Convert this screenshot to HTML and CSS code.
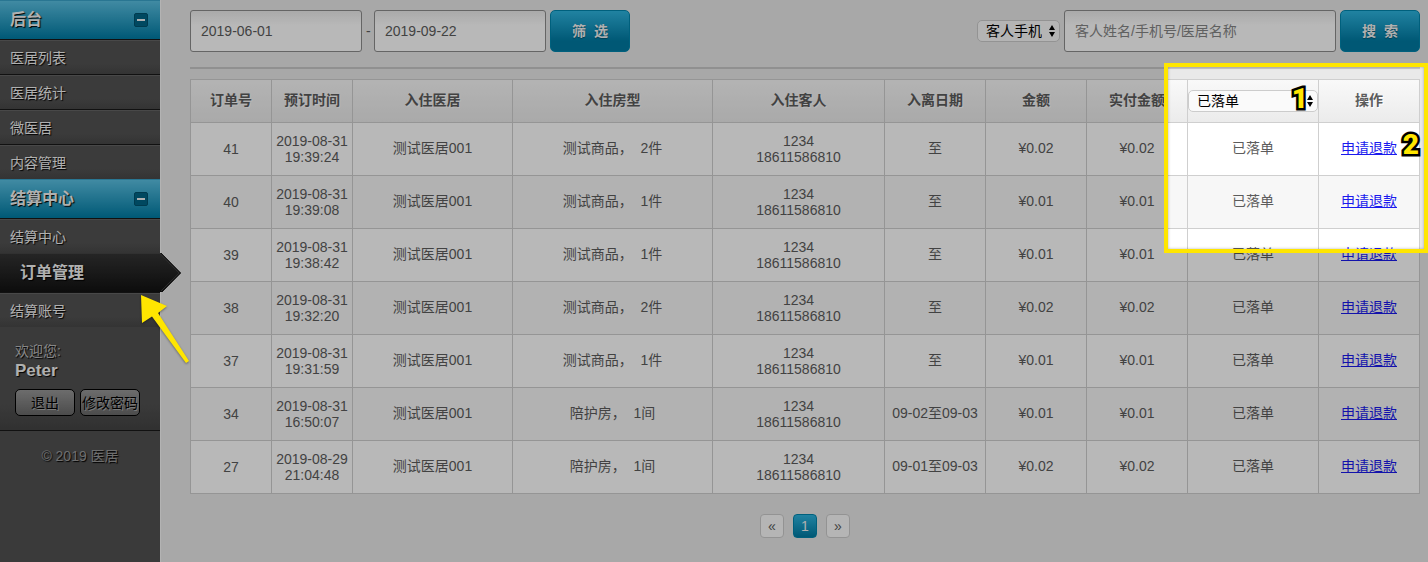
FILE: index.html
```html
<!DOCTYPE html>
<html lang="zh-CN">
<head>
<meta charset="utf-8">
<title>订单管理</title>
<link rel="stylesheet" href="styles.css">
</head>
<body>
<div class="page">
  <aside class="sidebar">
    <nav>
      <h2 class="group">后台<button class="toggle" type="button" aria-label="后台"><span class="minus"></span></button></h2>
      <ul class="menu">
        <li><a href="#">医居列表</a></li>
        <li><a href="#">医居统计</a></li>
        <li><a href="#">微医居</a></li>
        <li><a href="#">内容管理</a></li>
      </ul>
      <h2 class="group">结算中心<button class="toggle" type="button" aria-label="结算中心"><span class="minus"></span></button></h2>
      <ul class="menu">
        <li><a href="#">结算中心</a></li>
        <li class="active"><a href="#">订单管理</a>
          <svg class="pointer" viewBox="0 0 21 39" width="21" height="39" aria-hidden="true">
            <defs><linearGradient id="pt" x1="0" y1="0" x2="0" y2="1"><stop offset="0" stop-color="#343434"/><stop offset="1" stop-color="#121212"/></linearGradient></defs>
            <path d="M0 0H1L21 20L2 39H0Z" fill="url(#pt)"/>
            <path d="M0 1L19 20L1 38" fill="none" stroke="#3c3c3c" stroke-width="1"/>
            <path d="M1 0L20.500 20L2 39" fill="none" stroke="#1c1c1c" stroke-width="1"/>
          </svg>
        </li>
        <li><a href="#">结算账号</a></li>
      </ul>
    </nav>
    <section class="account">
      <p class="welcome">欢迎您:</p>
      <p class="name">Peter</p>
      <div class="account-actions">
        <button type="button">退出</button>
        <button type="button">修改密码</button>
      </div>
    </section>
    <footer class="copyright">© 2019 医居</footer>
  </aside>

  <main class="main">
    <div class="toolbar">
      <form class="filter">
        <input class="field date" type="text" value="2019-06-01" aria-label="开始日期">
        <span class="dash">-</span>
        <input class="field date" type="text" value="2019-09-22" aria-label="结束日期">
        <button class="primary" type="button">筛&nbsp; 选</button>
      </form>
      <form class="search">
        <span class="select">
          <select aria-label="搜索类型"><option>客人手机</option></select>
          <svg viewBox="0 0 8 14" width="8" height="14" aria-hidden="true"><path d="M4 1L7 6H1ZM4 13L7 8H1Z"/></svg>
        </span>
        <input class="field keyword" type="text" placeholder="客人姓名/手机号/医居名称" aria-label="关键字">
        <button class="primary" type="button">搜&nbsp; 索</button>
      </form>
    </div>

    <table class="orders">
      <colgroup>
        <col class="c-id"><col class="c-id"><col class="c-house"><col class="c-room"><col class="c-guest">
        <col class="c-mid"><col class="c-mid"><col class="c-mid"><col class="c-status"><col class="c-mid">
      </colgroup>
      <thead>
        <tr>
          <th>订单号</th><th>预订时间</th><th>入住医居</th><th>入住房型</th><th>入住客人</th><th>入离日期</th><th>金额</th><th>实付金额</th>
          <th class="status">
            <span class="select">
              <select aria-label="状态"><option>已落单</option></select>
              <svg viewBox="0 0 8 14" width="8" height="14" aria-hidden="true"><path d="M4 1L7 6H1ZM4 13L7 8H1Z"/></svg>
            </span>
          </th>
          <th>操作</th>
        </tr>
      </thead>
      <tbody>
        <tr><td>41</td><td>2019-08-31<br>19:39:24</td><td>测试医居001</td><td>测试商品，&nbsp; 2件</td><td>1234<br>18611586810</td><td>至</td><td>¥0.02</td><td>¥0.02</td><td>已落单</td><td><a href="#">申请退款</a></td></tr>
        <tr><td>40</td><td>2019-08-31<br>19:39:08</td><td>测试医居001</td><td>测试商品，&nbsp; 1件</td><td>1234<br>18611586810</td><td>至</td><td>¥0.01</td><td>¥0.01</td><td>已落单</td><td><a href="#">申请退款</a></td></tr>
        <tr><td>39</td><td>2019-08-31<br>19:38:42</td><td>测试医居001</td><td>测试商品，&nbsp; 1件</td><td>1234<br>18611586810</td><td>至</td><td>¥0.01</td><td>¥0.01</td><td>已落单</td><td><a href="#">申请退款</a></td></tr>
        <tr><td>38</td><td>2019-08-31<br>19:32:20</td><td>测试医居001</td><td>测试商品，&nbsp; 2件</td><td>1234<br>18611586810</td><td>至</td><td>¥0.02</td><td>¥0.02</td><td>已落单</td><td><a href="#">申请退款</a></td></tr>
        <tr><td>37</td><td>2019-08-31<br>19:31:59</td><td>测试医居001</td><td>测试商品，&nbsp; 1件</td><td>1234<br>18611586810</td><td>至</td><td>¥0.01</td><td>¥0.01</td><td>已落单</td><td><a href="#">申请退款</a></td></tr>
        <tr><td>34</td><td>2019-08-31<br>16:50:07</td><td>测试医居001</td><td>陪护房，&nbsp; 1间</td><td>1234<br>18611586810</td><td>09-02至09-03</td><td>¥0.01</td><td>¥0.01</td><td>已落单</td><td><a href="#">申请退款</a></td></tr>
        <tr><td>27</td><td>2019-08-29<br>21:04:48</td><td>测试医居001</td><td>陪护房，&nbsp; 1间</td><td>1234<br>18611586810</td><td>09-01至09-03</td><td>¥0.02</td><td>¥0.02</td><td>已落单</td><td><a href="#">申请退款</a></td></tr>
      </tbody>
    </table>

    <nav class="pager">
      <a href="#">«</a>
      <a href="#" class="current">1</a>
      <a href="#">»</a>
    </nav>
  </main>

  <div class="guide">
    <div class="spotlight"></div>
    <span class="step step-one">1</span>
    <span class="step step-two">2</span>
    <svg class="arrow" viewBox="0 0 52 72" width="52" height="72" aria-hidden="true">
      <path d="M1 1L27 12L18 19L49 67L46 69L12 22.500L2 29Z" fill="#ffe600"/>
    </svg>
  </div>
</div>
</body>
</html>
```
FILE: styles.css
```css
* {
  box-sizing: border-box;
}

body {
  margin: 0;
  background: #e9e9e9;
  color: #5c5c5c;
  font: 14px/16px "Liberation Sans", "Noto Sans CJK SC", sans-serif;
}

button,
input,
select {
  margin: 0;
  font: inherit;
}

h2,
p,
ul {
  margin: 0;
  padding: 0;
}

.page {
  position: relative;
  display: flex;
  min-height: 100vh;
}

/* Sidebar */

.sidebar {
  flex: 0 0 160px;
  background: #515151;
  color: #f4f4f4;
  text-shadow: 1px 1px 1px #000;
  box-shadow: 1px 0 0 #f8f8f8;
}

.group {
  display: flex;
  align-items: center;
  justify-content: space-between;
  height: 39px;
  padding: 0 12px 0 10px;
  border-top: 1px solid #3aa4cb;
  background: linear-gradient(#5ac0e2, #007ca4);
  font-size: 16px;
}

.toggle {
  display: grid;
  place-items: center;
  width: 14px;
  height: 14px;
  padding: 0;
  border: 1px solid #00526e;
  border-radius: 2px;
  background: #006486;
}

.minus {
  width: 8px;
  height: 2px;
  background: #f4f4f4;
}

.menu {
  list-style: none;
}

.menu li {
  height: 35px;
  border-top: 1px solid #181818;
  background: linear-gradient(#646464 1px, #525252 1px, #525252 24px, #484848);
}

.menu a {
  display: flex;
  align-items: center;
  height: 100%;
  padding: 2px 10px 0;
  color: inherit;
  text-decoration: none;
}

.menu .active {
  position: relative;
  height: 39px;
  border-top: 1px solid #444;
  background: linear-gradient(#343434, #121212);
  font-size: 16px;
  font-weight: bold;
}

.menu .active a {
  padding: 0 20px;
}

.pointer {
  position: absolute;
  top: -1px;
  left: 100%;
}

.account {
  padding: 16px 15px 14px;
  border-bottom: 1px solid #181818;
  background: linear-gradient(#515151 75%, #444);
}

.welcome {
  color: #bbb;
}

.name {
  padding: 2px 0 8px;
  font-size: 17px;
  font-weight: bold;
  line-height: 20px;
}

.account-actions {
  display: flex;
  gap: 5px;
}

.account-actions button {
  width: 60px;
  height: 27px;
  padding: 0;
  border: 1px solid #000;
  border-radius: 5px;
  background: linear-gradient(#979797, #6a6a6a);
  color: #000;
  text-shadow: 1px 1px 0 #aaa;
  white-space: nowrap;
}

.copyright {
  padding: 17px 0;
  color: #999;
  text-align: center;
}

/* Toolbar */

.main {
  flex: 1;
  min-width: 0;
  padding: 10px 8px 20px 30px;
}

.toolbar {
  display: flex;
  justify-content: space-between;
  padding-bottom: 15px;
  border-bottom: 2px solid #c8c8c8;
}

.filter,
.search {
  display: flex;
  align-items: center;
  gap: 4px;
}

.field {
  height: 42px;
  padding: 0 10px;
  border: 1px solid #8c8c8c;
  border-radius: 3px;
  background: linear-gradient(#ececec, #fff 14px);
  color: #5c5c5c;
}

.field::placeholder {
  color: #868686;
  opacity: 1;
}

.date {
  width: 172px;
}

.dash {
  width: 4px;
}

.keyword {
  width: 272px;
}

.primary {
  width: 80px;
  height: 42px;
  padding: 0;
  border: 1px solid #0086ae;
  border-radius: 5px;
  background: linear-gradient(#2eb5e0, #007ba3 75%);
  color: #f4f4f4;
  font-weight: bold;
  text-shadow: 0 1px 1px #005571;
}

.select {
  display: inline-grid;
  align-items: center;
}

.select select,
.select svg {
  grid-area: 1 / 1;
}

.select svg {
  justify-self: end;
  margin-right: 4px;
  pointer-events: none;
}

.select select {
  appearance: none;
  width: 100%;
  height: 22px;
  padding: 0 17px 0 8px;
  border: 1px solid #ccc;
  border-radius: 5px;
  background: #fafafa;
  color: #000;
  line-height: 20px;
}

/* Orders */

.orders {
  width: 100%;
  margin-top: 10px;
  border-collapse: collapse;
  table-layout: fixed;
  text-align: center;
}

.c-id {
  width: 81px;
}

.c-house {
  width: 160px;
}

.c-room {
  width: 200px;
}

.c-guest {
  width: 172px;
}

.c-mid {
  width: 101px;
}

.c-status {
  width: 131px;
}

.orders th,
.orders td {
  padding: 0 0 2px;
  border: 1px solid #cfcfcf;
}

.orders td:nth-child(-n + 2),
.orders td:nth-child(5),
.orders .status {
  padding: 0;
}

.orders thead tr {
  height: 43px;
  background: linear-gradient(#f9f9f9, #ebebeb);
}

.orders th {
  text-shadow: 1px 1px 0 #fff;
}

.orders tbody tr {
  height: 53px;
  background: #fff;
}

.orders tbody tr:nth-child(even) {
  background: #f7f7f7;
}

.orders a {
  color: #1a1aee;
}

.status .select {
  display: grid;
  font-weight: normal;
  text-shadow: none;
}

/* Pager */

.pager {
  display: flex;
  justify-content: center;
  gap: 9px;
  padding-top: 20px;
}

.pager a {
  display: grid;
  place-items: center;
  width: 24px;
  height: 24px;
  border: 1px solid #ccc;
  border-radius: 4px;
  background: #fbfbfb;
  color: #5c5c5c;
  text-decoration: none;
}

.pager .current {
  border-color: #0086ae;
  background: linear-gradient(#2eb5e0, #007ba3);
  color: #f4f4f4;
}

/* Guide layer over the page */

.guide {
  position: absolute;
  inset: 0;
  overflow: hidden;
  pointer-events: none;
}

.spotlight {
  position: absolute;
  top: 63px;
  right: 0;
  width: 264px;
  height: 190px;
  border: 4px solid #ffe600;
  box-shadow: 0 0 0 2000px rgba(0, 0, 0, 0.28), inset 0 0 3px rgba(0, 0, 0, 0.3);
}

.step {
  position: absolute;
  color: #ffe600;
  font: 900 28px/28px Roboto, sans-serif;
  -webkit-text-stroke: 5px #000;
  paint-order: stroke fill;
}

.step-one {
  top: 85px;
  right: 120px;
}

.step-two {
  top: 131px;
  right: 9px;
}

.arrow {
  position: absolute;
  top: 294px;
  left: 140px;
  filter: drop-shadow(0 1px 1px rgba(0, 0, 0, 0.4));
}
```
